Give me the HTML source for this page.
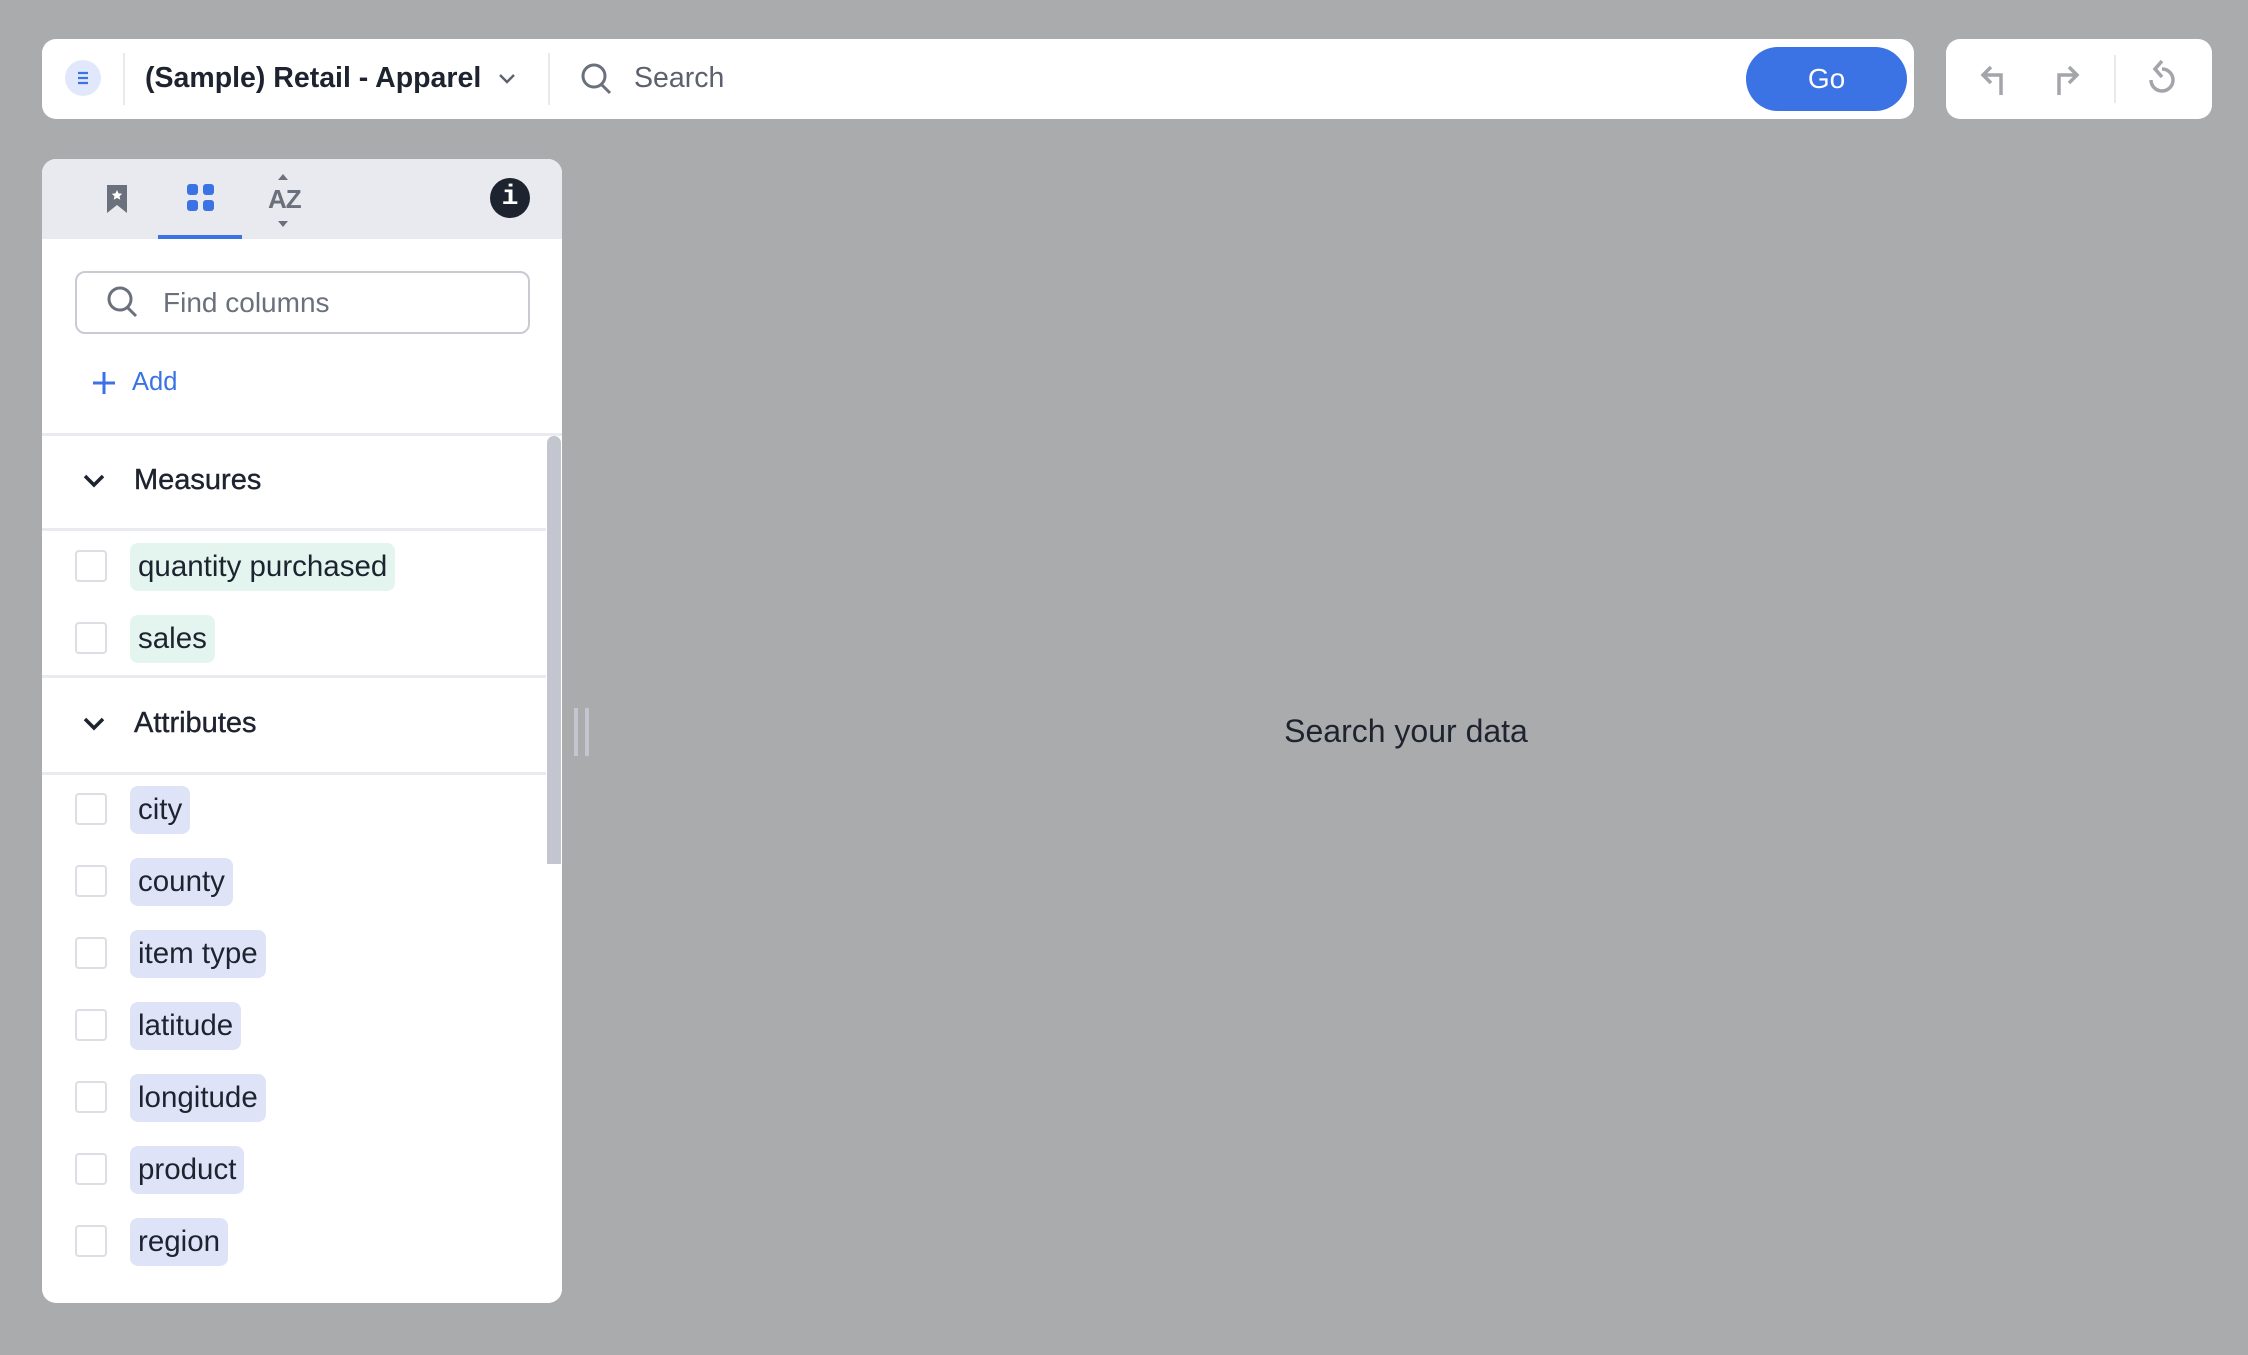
<!DOCTYPE html>
<html><head><meta charset="utf-8"><style>
*{box-sizing:border-box;margin:0;padding:0}
body{width:2248px;height:1355px;background:#aaabad;font-family:"Liberation Sans",sans-serif;position:relative;overflow:hidden;color:#1d232f}
.abs{position:absolute}
.bar{position:absolute;background:#fff;border-radius:14px;top:39px;height:80px}
.vdiv{position:absolute;width:2px;background:#e8e9ed}
.panel{position:absolute;left:42px;top:159px;width:520px;height:1144px;background:#fff;border-radius:14px;overflow:hidden}
.hdr{position:absolute;left:0;top:0;width:100%;height:80px;background:#e9eaef}
.line{position:absolute;left:0;width:504px;height:3px;background:#eaebef}
.cb{position:absolute;left:33px;width:32px;height:32px;border:2px solid #dcdee4;border-radius:4px;background:#fff}
.chip{position:absolute;left:88px;height:48px;border-radius:8px;font-size:29.5px;line-height:48px;padding:0 8px;color:#1d232f}
.m{background:#e3f5ee}.a{background:#dfe3f7}
.sec{position:absolute;left:92px;font-size:29px;color:#1d232f;-webkit-text-stroke:0.4px #1d232f}
</style></head><body>
<div class="bar" style="left:42px;width:1872px">
  <div class="abs" style="left:23px;top:21px;width:36px;height:36px;border-radius:50%;background:#e2e8fb"></div>
  <svg class="abs" style="left:31px;top:29px" width="20" height="20" viewBox="0 0 20 20"><path d="M5 5h10M5 10h10M5 15h10" stroke="#3b73e5" stroke-width="2.2"/></svg>
  <div class="vdiv" style="left:81px;top:14px;height:52px"></div>
  <div class="abs" style="left:103px;top:20px;font-size:28.5px;font-weight:bold;line-height:38px;color:#1d232f">(Sample) Retail - Apparel</div>
  <svg class="abs" style="left:454px;top:30px" width="22" height="20" viewBox="0 0 22 20"><path d="M4 6l7 7 7-7" stroke="#5b616d" stroke-width="2.4" fill="none"/></svg>
  <div class="vdiv" style="left:506px;top:14px;height:52px"></div>
  <svg class="abs" style="left:537px;top:21px" width="36" height="38" viewBox="0 0 36 38"><circle cx="15" cy="16" r="11" stroke="#6a707c" stroke-width="3" fill="none"/><path d="M23 25l8 8" stroke="#6a707c" stroke-width="3"/></svg>
  <div class="abs" style="left:592px;top:20px;font-size:28.5px;line-height:38px;color:#5b616d">Search</div>
  <div class="abs" style="left:1704px;top:8px;width:161px;height:64px;border-radius:32px;background:#3b73e5;color:#fff;font-size:28px;line-height:64px;text-align:center">Go</div>
</div>
<div class="bar" style="left:1946px;width:266px">
  <svg class="abs" style="left:32px;top:22px" width="32" height="36" viewBox="0 0 32 36"><path d="M13 6L5 14l8 8M5 14h18v20" stroke="#a3a5aa" stroke-width="3.5" fill="none"/></svg>
  <svg class="abs" style="left:104px;top:22px" width="32" height="36" viewBox="0 0 32 36"><path d="M19 6l8 8-8 8M27 14H9v20" stroke="#a3a5aa" stroke-width="3.5" fill="none"/></svg>
  <div class="vdiv" style="left:168px;top:16px;height:48px"></div>
  <svg class="abs" style="left:200px;top:20px" width="34" height="40" viewBox="0 0 34 40"><path d="M16 10a11 11 0 1 1-11 11" stroke="#a3a5aa" stroke-width="3.5" fill="none"/><path d="M16 2l-7 8 7 8" stroke="#a3a5aa" stroke-width="3.5" fill="none"/></svg>
</div>
<div class="panel">
  <div class="hdr"></div>
  <svg class="abs" style="left:62px;top:22px" width="26" height="36" viewBox="0 0 26 36"><path d="M3 4h20v28l-10-8-10 8z" fill="#6a707c"/><path d="M13 9l1.6 3.4 3.6.4-2.7 2.4.8 3.6-3.3-1.9-3.3 1.9.8-3.6-2.7-2.4 3.6-.4z" fill="#fff"/></svg>
  <svg class="abs" style="left:144px;top:24px" width="30" height="30" viewBox="0 0 30 30"><rect x="1" y="1" width="11" height="11" rx="3" fill="#3b73e5"/><rect x="17" y="1" width="11" height="11" rx="3" fill="#3b73e5"/><rect x="1" y="17" width="11" height="11" rx="3" fill="#3b73e5"/><rect x="17" y="17" width="11" height="11" rx="3" fill="#3b73e5"/></svg>
  <div class="abs" style="left:116px;top:76px;width:84px;height:4px;background:#3b73e5"></div>
  <div class="abs" style="left:226px;top:20px;font-size:26px;font-weight:bold;color:#6a707c;line-height:40px;letter-spacing:-1px">AZ</div>
  <svg class="abs" style="left:233px;top:12px" width="16" height="60" viewBox="0 0 16 60"><path d="M3 9l5-6 5 6zM3 50l5 6 5-6z" fill="#6a707c"/></svg>
  <div class="abs" style="left:448px;top:19px;width:40px;height:40px;border-radius:50%;background:#1d232f;color:#fff;font-family:'Liberation Mono',monospace;font-weight:bold;font-size:28px;line-height:40px;text-align:center">i</div>
  <div class="abs" style="left:33px;top:112px;width:455px;height:63px;border:2px solid #c9cbd2;border-radius:10px"></div>
  <svg class="abs" style="left:63px;top:124px" width="36" height="38" viewBox="0 0 36 38"><circle cx="15" cy="16" r="11" stroke="#6a707c" stroke-width="3" fill="none"/><path d="M23 25l8 8" stroke="#6a707c" stroke-width="3"/></svg>
  <div class="abs" style="left:121px;top:125px;font-size:28px;line-height:38px;color:#6a707c">Find columns</div>
  <svg class="abs" style="left:49px;top:211px" width="26" height="26" viewBox="0 0 26 26"><path d="M13 2v22M2 13h22" stroke="#3b73e5" stroke-width="3"/></svg>
  <div class="abs" style="left:90px;top:206px;font-size:25.5px;line-height:34px;color:#3b73e5">Add</div>
  <div class="abs" style="left:0;top:274px;width:520px;height:3px;background:#eaebef"></div>
  <div class="abs" style="left:504px;top:277px;width:16px;height:870px;background:#fff"></div>
  <div class="abs" style="left:505px;top:277px;width:14px;height:428px;background:#c3c6ce;border-radius:7px 7px 0 0"></div>
  <svg class="abs" style="left:38px;top:308px" width="28" height="28" viewBox="0 0 28 28"><path d="M5 9l9 9 9-9" stroke="#1d232f" stroke-width="3.5" fill="none"/></svg>
  <div class="sec" style="top:305px">Measures</div>
  <div class="line" style="top:369px"></div>
  <div class="cb" style="top:391px"></div><div class="chip m" style="top:384px">quantity purchased</div>
  <div class="cb" style="top:463px"></div><div class="chip m" style="top:456px">sales</div>
  <div class="line" style="top:516px"></div>
  <svg class="abs" style="left:38px;top:551px" width="28" height="28" viewBox="0 0 28 28"><path d="M5 9l9 9 9-9" stroke="#1d232f" stroke-width="3.5" fill="none"/></svg>
  <div class="sec" style="top:548px">Attributes</div>
  <div class="line" style="top:613px"></div>
  <div class="cb" style="top:634px"></div><div class="chip a" style="top:627px">city</div>
  <div class="cb" style="top:706px"></div><div class="chip a" style="top:699px">county</div>
  <div class="cb" style="top:778px"></div><div class="chip a" style="top:771px">item type</div>
  <div class="cb" style="top:850px"></div><div class="chip a" style="top:843px">latitude</div>
  <div class="cb" style="top:922px"></div><div class="chip a" style="top:915px">longitude</div>
  <div class="cb" style="top:994px"></div><div class="chip a" style="top:987px">product</div>
  <div class="cb" style="top:1066px"></div><div class="chip a" style="top:1059px">region</div>
</div>
<div class="abs" style="left:574px;top:708px;width:4px;height:48px;background:#c3c6ce"></div>
<div class="abs" style="left:585px;top:708px;width:4px;height:48px;background:#c3c6ce"></div>
<div class="abs" style="left:1206px;top:710px;width:400px;text-align:center;font-size:32px;line-height:42px;color:#1d232f">Search your data</div>
</body></html>
